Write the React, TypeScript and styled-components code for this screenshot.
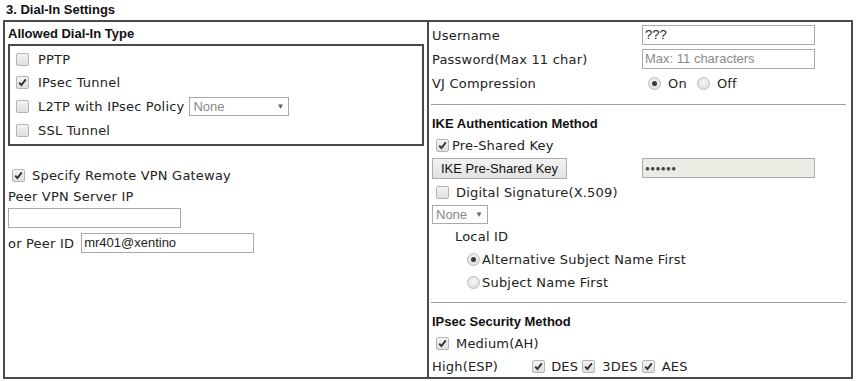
import styled, { createGlobalStyle } from 'styled-components';

const GlobalStyle = createGlobalStyle`
  body {
    margin: 0;
    background: #fff;
    color: #222;
    font-family: 'DejaVu Sans', Verdana, sans-serif;
    font-size: 13px;
    letter-spacing: 0.2px;
  }
`;

const Page = styled.div`
  width: 856px;
  height: 381px;
  padding: 0 3px;
  box-sizing: border-box;
`;

const Title = styled.div`
  height: 20px;
  line-height: 19px;
  padding-left: 3px;
  font-family: 'Liberation Sans', Arial, sans-serif;
  font-weight: bold;
  font-size: 13px;
  letter-spacing: 0;
  color: #111;
`;

const Table = styled.div`
  display: grid;
  grid-template-columns: 422px 1fr;
  height: 359px;
  border: 2px solid #4a4a4a;
  box-sizing: border-box;
  overflow: hidden;
`;

const Cell = styled.div<{ $right?: boolean }>`
  padding: 0 3px;
  ${({ $right }) => ($right ? 'border-left: 2px solid #4a4a4a; padding-right: 4px;' : '')}
`;

const Heading = styled.div<{ $top?: number }>`
  height: 22px;
  margin-top: ${({ $top }) => $top ?? 0}px;
  display: flex;
  align-items: center;
  font-family: 'Liberation Sans', Arial, sans-serif;
  font-weight: bold;
  font-size: 13px;
  letter-spacing: 0;
  color: #111;
`;

const TypeBox = styled.div`
  border: 2px solid #4a4a4a;
  padding: 1px 0 2px;
`;

const Row = styled.div<{ $h?: number; $indent?: number }>`
  height: ${({ $h }) => $h ?? 23}px;
  display: flex;
  align-items: center;
  padding-left: ${({ $indent }) => $indent ?? 0}px;
  white-space: nowrap;
`;

const FormGrid = styled.div`
  display: grid;
  grid-template-columns: 210px 173px;
  grid-auto-rows: 24px;
  align-items: center;
  padding-top: 1px;
`;

const Rule = styled.div<{ $top: number }>`
  height: 1px;
  background: #a0a0a0;
  margin: ${({ $top }) => $top}px 1px 0 -1px;
`;

const Box = styled.span<{ $gapR?: number }>`
  display: inline-flex;
  align-items: center;
  justify-content: center;
  width: 13px;
  height: 13px;
  box-sizing: border-box;
  border: 1px solid #b4b4b4;
  border-radius: 2px;
  background: linear-gradient(#f4f4f4, #dedede);
  margin-right: ${({ $gapR }) => $gapR ?? 8}px;
  flex: none;
`;

const Round = styled.span<{ $gapR?: number }>`
  display: inline-flex;
  align-items: center;
  justify-content: center;
  width: 13px;
  height: 13px;
  box-sizing: border-box;
  border: 1px solid #bdbdbd;
  border-radius: 50%;
  background: radial-gradient(circle at 50% 40%, #f6f6f6, #d8d8d8);
  margin-right: ${({ $gapR }) => $gapR ?? 4}px;
  flex: none;
`;

const Dot = styled.span`
  width: 5px;
  height: 5px;
  border-radius: 50%;
  background: #3a3a3a;
`;

const Check = ({ checked, gapR }: { checked?: boolean; gapR?: number }) => (
  <Box $gapR={gapR}>
    {checked && (
      <svg width="9" height="9" viewBox="0 0 9 9">
        <path d="M1.2 4.6 L3.4 7 L7.8 1.4" fill="none" stroke="#333" strokeWidth="1.9" />
      </svg>
    )}
  </Box>
);

const Radio = ({ checked, gapR }: { checked?: boolean; gapR?: number }) => (
  <Round $gapR={gapR}>{checked && <Dot />}</Round>
);

const TextInput = styled.div<{ $muted?: boolean; $grey?: boolean }>`
  width: 173px;
  height: 20px;
  box-sizing: border-box;
  border: 1px solid #a9a9a9;
  background: ${({ $grey }) => ($grey ? '#ebebe4' : '#fff')};
  font-family: 'Liberation Sans', Arial, sans-serif;
  font-size: 13px;
  letter-spacing: 0;
  line-height: 18px;
  padding-left: 2px;
  color: ${({ $muted }) => ($muted ? '#8a8a8a' : '#222')};
  overflow: hidden;
  flex: none;
`;

const Dots = styled.span`
  font-size: 8px;
  letter-spacing: 0.4px;
  color: #444;
  vertical-align: 1px;
`;

const Select = styled.div<{ $w: number }>`
  width: ${({ $w }) => $w}px;
  height: 19px;
  box-sizing: border-box;
  border: 1px solid #a9a9a9;
  display: flex;
  align-items: center;
  justify-content: space-between;
  padding: 0 4px 0 3px;
  font-family: 'Liberation Sans', Arial, sans-serif;
  font-size: 13px;
  letter-spacing: 0;
  color: #888;
  background: #fff;
`;

const Arrow = styled.span`
  font-size: 8px;
  color: #666;
`;

const Button = styled.div`
  width: 135px;
  height: 21px;
  box-sizing: border-box;
  border: 1px solid #adadad;
  background: linear-gradient(#f2f2f2, #e2e2e2);
  font-family: 'Liberation Sans', Arial, sans-serif;
  font-size: 13px;
  letter-spacing: 0;
  color: #111;
  display: flex;
  align-items: center;
  justify-content: center;
  flex: none;
`;

const Gap = styled.div<{ $h: number }>`
  height: ${({ $h }) => $h}px;
`;

const Spacer = styled.span<{ $w: number }>`
  display: inline-block;
  width: ${({ $w }) => $w}px;
  flex: none;
`;

export default function App() {
  return (
    <Page>
      <GlobalStyle />
      <Title>3. Dial-In Settings</Title>
      <Table>
        <Cell>
          <Heading>Allowed Dial-In Type</Heading>
          <TypeBox>
            <Row $indent={6} $h={24}><Check gapR={9} />PPTP</Row>
            <Row $indent={6}><Check checked gapR={9} />IPsec Tunnel</Row>
            <Row $indent={6} $h={24}>
              <Check gapR={9} />L2TP with IPsec Policy
              <Spacer $w={5} />
              <Select $w={100}>None<Arrow>▼</Arrow></Select>
            </Row>
            <Row $indent={6} $h={24}><Check gapR={9} />SSL Tunnel</Row>
          </TypeBox>
          <Gap $h={18} />
          <Row $indent={4}><Check checked gapR={7} />Specify Remote VPN Gateway</Row>
          <Row $h={19}>Peer VPN Server IP</Row>
          <Gap $h={2} />
          <TextInput />
          <Gap $h={4} />
          <Row $h={22}>or Peer ID<Spacer $w={7} /><TextInput>mr401@xentino</TextInput></Row>
        </Cell>
        <Cell $right>
          <FormGrid>
            <span>Username</span>
            <TextInput>???</TextInput>
            <span>Password(Max 11 char)</span>
            <TextInput $muted>Max: 11 characters</TextInput>
            <span>VJ Compression</span>
            <Row $indent={6}>
              <Radio checked gapR={7} />On<Spacer $w={10} />
              <Radio gapR={7} />Off
            </Row>
          </FormGrid>
          <Rule $top={9} />
          <Heading $top={7}>IKE Authentication Method</Heading>
          <Row $indent={4} $h={22}><Check checked gapR={3} />Pre-Shared Key</Row>
          <Row $h={24}>
            <Button>IKE Pre-Shared Key</Button>
            <Spacer $w={75} />
            <TextInput $grey><Dots>●●●●●●</Dots></TextInput>
          </Row>
          <Row $indent={4} $h={25}><Check gapR={7} />Digital Signature(X.509)</Row>
          <Row $h={19}><Select $w={56}>None<Arrow>▼</Arrow></Select></Row>
          <Row $indent={23} $h={24}>Local ID</Row>
          <Row $indent={35}><Radio checked gapR={2} />Alternative Subject Name First</Row>
          <Row $indent={35}><Radio gapR={2} />Subject Name First</Row>
          <Rule $top={8} />
          <Heading $top={7}>IPsec Security Method</Heading>
          <Row $indent={4} $h={23}><Check checked gapR={7} />Medium(AH)</Row>
          <Row $h={22}>
            High(ESP)<Spacer $w={34} />
            <Check checked gapR={6} />DES<Spacer $w={4} />
            <Check checked gapR={7} />3DES<Spacer $w={4} />
            <Check checked gapR={7} />AES
          </Row>
        </Cell>
      </Table>
    </Page>
  );
}
